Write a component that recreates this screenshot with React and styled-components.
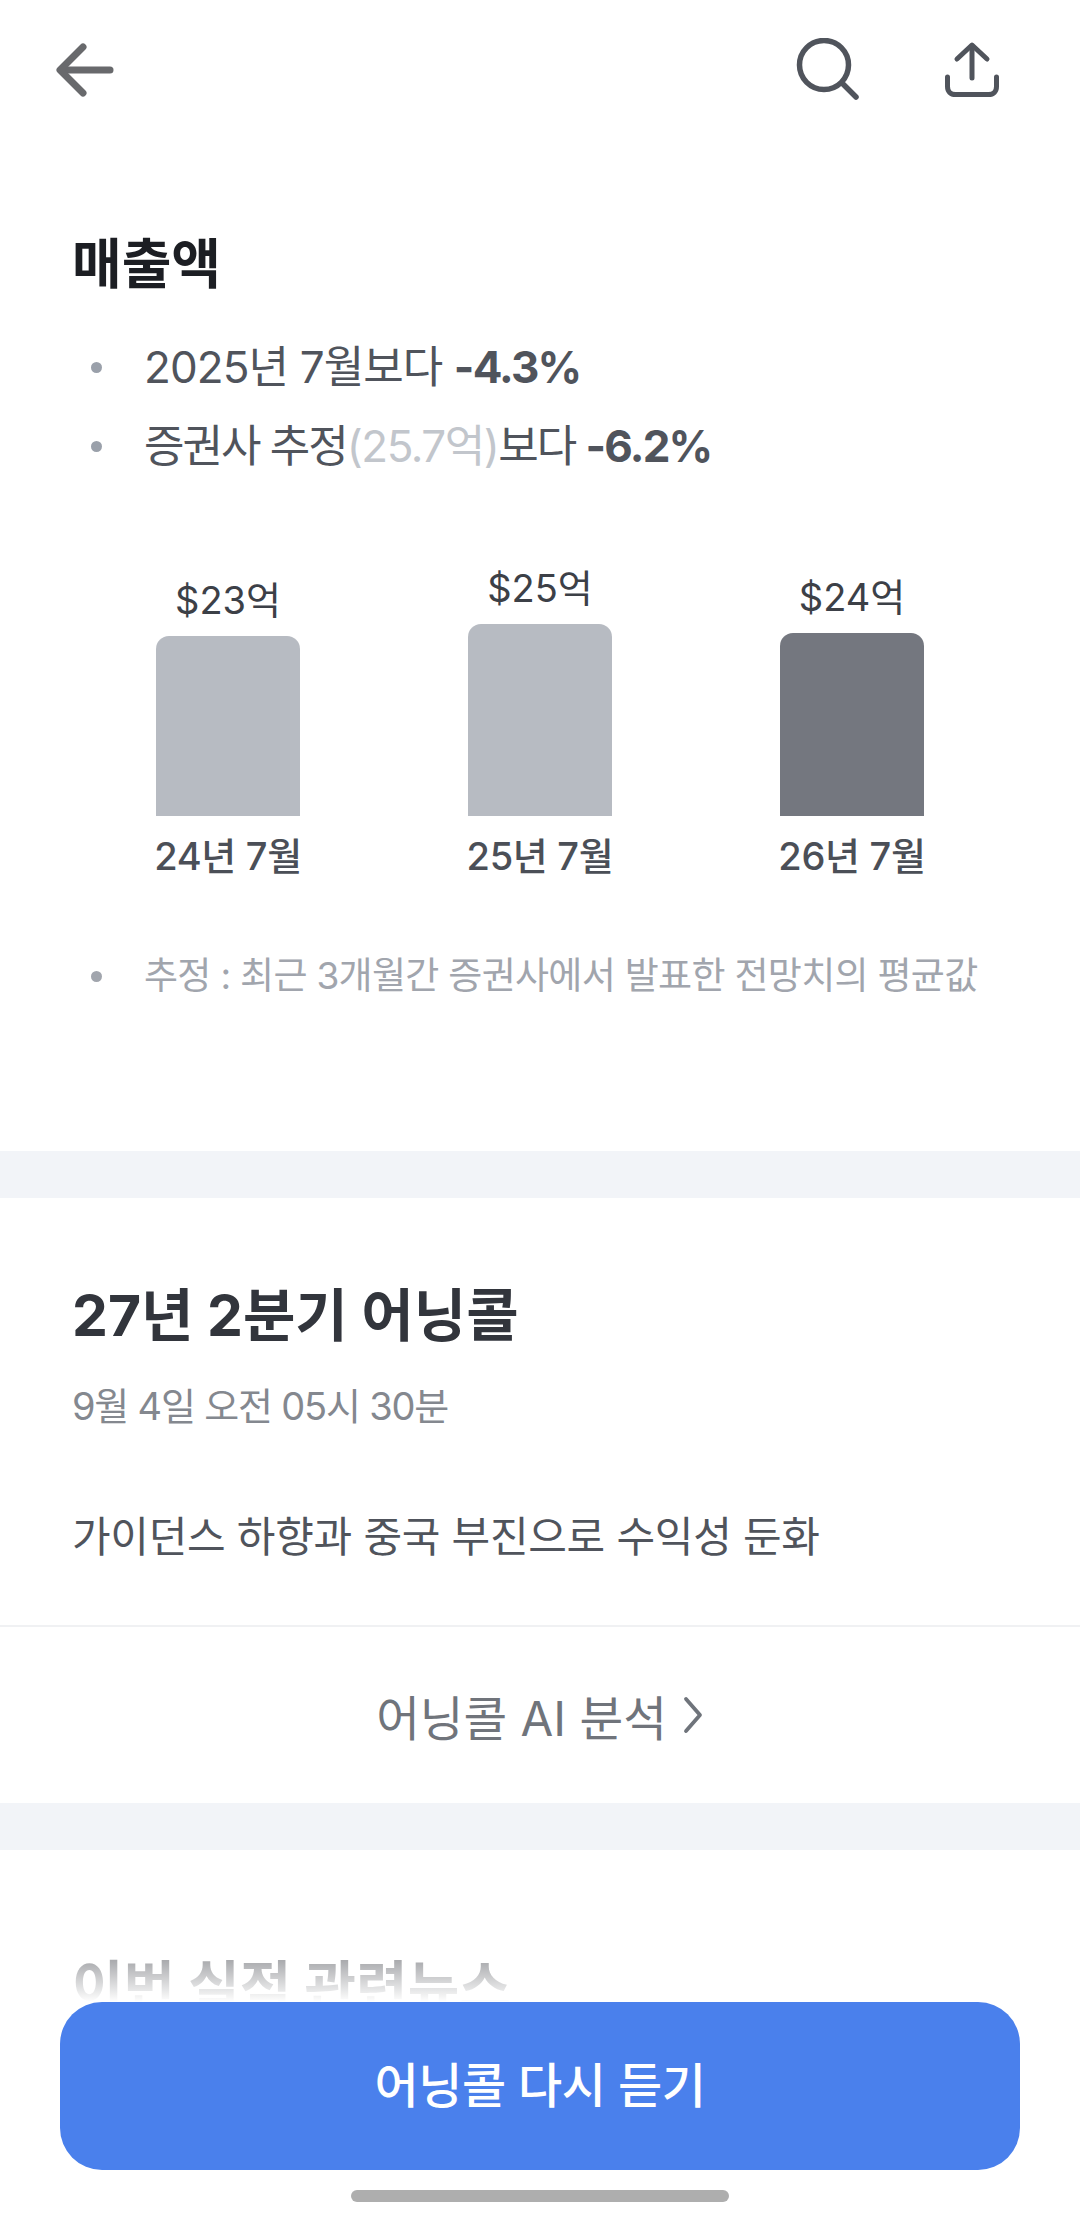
import React from "react";
import styled, { createGlobalStyle } from "styled-components";

const GlobalStyle = createGlobalStyle`
  html, body {
    margin: 0;
    padding: 0;
    background: #fff;
  }
  body {
    font-family: "Inter", "Noto Sans CJK KR", sans-serif;
  }
`;

const bars = [
  { value: "$23억", label: "24년 7월", height: 180 },
  { value: "$25억", label: "25년 7월", height: 192 },
  { value: "$24억", label: "26년 7월", height: 183, current: true },
];

const App = () => {
  return (
    <Page>
      <GlobalStyle />
      <Header>
        <IconButton>
          <svg width="60" height="56" viewBox="0 0 60 56" fill="none" stroke="#68696c" strokeWidth="7" strokeLinecap="round" strokeLinejoin="round">
            <path d="M54 28H5" />
            <path d="M27 5L4 28l23 23" />
          </svg>
        </IconButton>
        <HeaderRight>
          <IconButton>
            <svg width="64" height="64" viewBox="0 0 64 64" fill="none" stroke="#50545c" strokeWidth="5.5" strokeLinecap="round">
              <circle cx="29" cy="27" r="24.5" />
              <path d="M47 45l14 14" />
            </svg>
          </IconButton>
          <IconButton>
            <svg width="56" height="60" viewBox="0 0 56 60" fill="none" stroke="#50545c" strokeWidth="5" strokeLinecap="round" strokeLinejoin="round">
              <path d="M28 38V6" />
              <path d="M13 19L28 5l15 14" />
              <path d="M3.5 37v9.5c0 5 3 8 8 8h33c5 0 8-3 8-8V37" />
            </svg>
          </IconButton>
        </HeaderRight>
      </Header>

      <RevenueSection>
        <Title>매출액</Title>
        <BulletList>
          <Bullet $spacing={-0.9}>
            2025년 7월보다 <strong>-4.3%</strong>
          </Bullet>
          <Bullet $spacing={-2}>
            증권사 추정<Muted>(25.7억)</Muted>보다 <strong>-6.2%</strong>
          </Bullet>
        </BulletList>
        <Chart>
          {bars.map((bar) => (
            <Column key={bar.label}>
              <BarValue>{bar.value}</BarValue>
              <Bar $height={bar.height} $current={bar.current} />
              <BarLabel>{bar.label}</BarLabel>
            </Column>
          ))}
        </Chart>
        <Note>추정 : 최근 3개월간 증권사에서 발표한 전망치의 평균값</Note>
      </RevenueSection>

      <Divider />

      <CallSection>
        <CallHeading>27년 2분기 어닝콜</CallHeading>
        <CallDate>9월 4일 오전 05시 30분</CallDate>
        <CallSummary>가이던스 하향과 중국 부진으로 수익성 둔화</CallSummary>
      </CallSection>
      <AnalysisLink>
        어닝콜 AI 분석
        <svg width="22" height="40" viewBox="0 0 22 40" fill="none" stroke="#6f747b" strokeWidth="3.8" strokeLinecap="round" strokeLinejoin="round">
          <path d="M4 4l14 16L4 36" />
        </svg>
      </AnalysisLink>

      <Divider />

      <NewsHeading>이번 실적 관련뉴스</NewsHeading>

      <BottomOverlay>
        <ListenButton>어닝콜 다시 듣기</ListenButton>
        <HomeBar />
      </BottomOverlay>
    </Page>
  );
};

const Page = styled.div`
  position: relative;
  width: 1080px;
  height: 2218px;
  overflow: hidden;
  background: #fff;
`;

const Header = styled.header`
  height: 140px;
  padding: 0 80px 0 56px;
  box-sizing: border-box;
  display: flex;
  justify-content: space-between;
  align-items: center;
`;

const HeaderRight = styled.div`
  display: flex;
  align-items: center;
  gap: 85px;
`;

const IconButton = styled.div`
  display: flex;
  align-items: center;
  justify-content: center;
`;

const RevenueSection = styled.section`
  height: 1011px;
  box-sizing: border-box;
  padding: 92px 72px 0;
`;

const Title = styled.h2`
  margin: 0;
  font-size: 54px;
  line-height: 66px;
  font-weight: 700;
  color: #1c1e23;
`;

const BulletList = styled.ul`
  list-style: none;
  margin: 42px 0 0;
  padding: 0;
  display: flex;
  flex-direction: column;
  gap: 25px;
`;

const Bullet = styled.li`
  position: relative;
  padding-left: 72px;
  font-size: 44px;
  line-height: 54px;
  letter-spacing: ${({ $spacing }) => $spacing ?? -1.5}px;
  color: #50545c;

  &::before {
    content: "";
    position: absolute;
    left: 19px;
    top: 22px;
    width: 11px;
    height: 11px;
    border-radius: 50%;
    background: #9aa0aa;
  }

  strong {
    font-weight: 700;
    letter-spacing: -1.8px;
  }
`;

const Muted = styled.span`
  color: #c2c6cc;
  letter-spacing: -1.5px;
`;

const Chart = styled.div`
  margin: 0 84px;
  height: 406px;
  display: flex;
  justify-content: space-between;
  align-items: flex-end;
`;

const Column = styled.div`
  width: 144px;
  display: flex;
  flex-direction: column;
  align-items: center;
`;

const BarValue = styled.div`
  margin-bottom: 14px;
  font-size: 38px;
  line-height: 44px;
  color: #3c4047;
  white-space: nowrap;
`;

const Bar = styled.div`
  width: 144px;
  height: ${({ $height }) => $height}px;
  border-radius: 13px 13px 0 0;
  background: ${({ $current }) => ($current ? "#74777f" : "#b7bbc2")};
`;

const BarLabel = styled.div`
  margin-top: 17px;
  font-size: 38px;
  line-height: 46px;
  font-weight: 500;
  letter-spacing: -0.3px;
  color: #4b4f57;
  white-space: nowrap;
`;

const Note = styled(Bullet).attrs({ as: "div" })`
  margin-top: 74px;
  font-size: 37px;
  line-height: 46px;
  letter-spacing: -0.7px;
  color: #a1a5ad;
  white-space: nowrap;

  &::before {
    top: 18px;
    background: #a1a5ad;
  }
`;

const Divider = styled.div`
  height: 47px;
  background: #f2f4f8;
`;

const CallSection = styled.section`
  height: 429px;
  box-sizing: border-box;
  padding: 84px 72px 0;
  border-bottom: 2px solid #f0f1f3;
`;

const CallHeading = styled.h2`
  margin: 0;
  font-size: 57px;
  line-height: 68px;
  font-weight: 700;
  color: #32353c;
`;

const CallDate = styled.div`
  margin-top: 33px;
  font-size: 38px;
  line-height: 46px;
  letter-spacing: -1.2px;
  color: #84888f;
`;

const CallSummary = styled.div`
  margin-top: 81px;
  font-size: 42px;
  line-height: 54px;
  letter-spacing: -0.3px;
  color: #50545c;
`;

const AnalysisLink = styled.div`
  height: 176px;
  display: flex;
  align-items: center;
  justify-content: center;
  gap: 15px;
  font-size: 47.5px;
  color: #70747b;
`;

const NewsHeading = styled.h2`
  margin: 0;
  padding: 106px 72px 0;
  font-size: 56px;
  line-height: 62px;
  font-weight: 700;
  color: #32353c;
`;

const BottomOverlay = styled.div`
  position: absolute;
  left: 0;
  right: 0;
  bottom: 0;
  padding-top: 60px;
  background: linear-gradient(to bottom, rgba(255, 255, 255, 0.4) 0, #fff 60px);
  display: flex;
  flex-direction: column;
  align-items: center;
`;

const ListenButton = styled.div`
  width: 960px;
  height: 168px;
  box-sizing: border-box;
  padding-bottom: 8px;
  border-radius: 42px;
  background: #4a80ec;
  color: #fff;
  display: flex;
  align-items: center;
  justify-content: center;
  font-size: 48px;
  font-weight: 500;
  letter-spacing: -0.4px;
`;

const HomeBar = styled.div`
  margin: 20px 0 16px;
  width: 378px;
  height: 12px;
  border-radius: 6px;
  background: #aeaeae;
`;

export default App;
